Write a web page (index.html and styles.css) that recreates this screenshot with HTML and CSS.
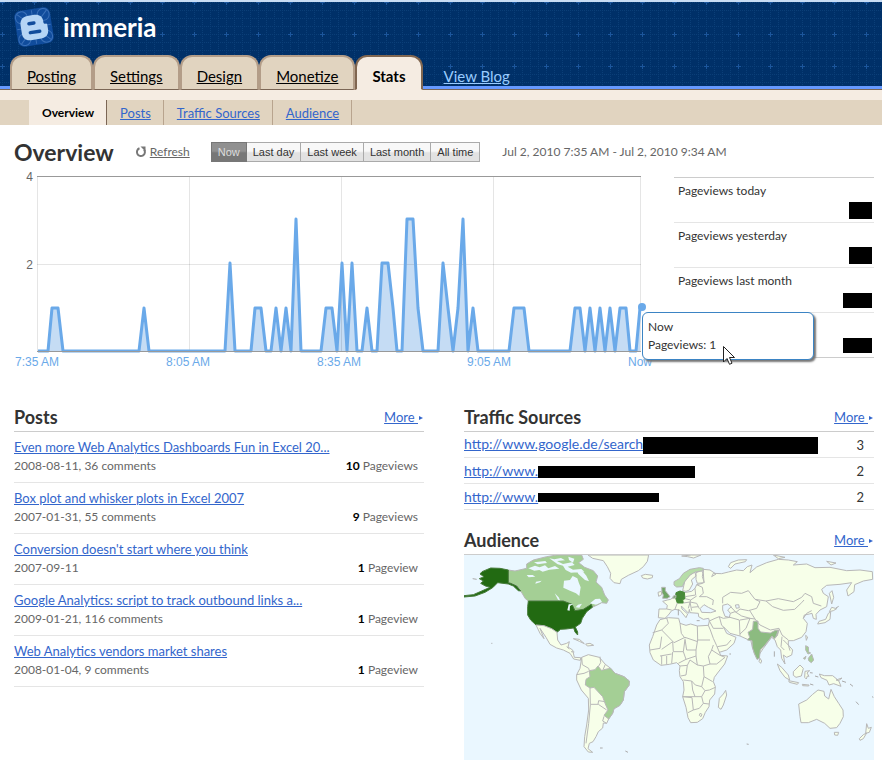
FILE: index.html
```html
<!DOCTYPE html>
<html lang="en">
<head>
    <meta charset="UTF-8">
    <meta name="viewport" content="width=device-width, initial-scale=1.0">
    <title>immeria - Stats</title>
    <link rel="stylesheet" href="styles.css">
</head>
<body>
    <header id="header">
        <div class="brand">
            <svg class="logo" viewBox="0 0 40 40" aria-hidden="true">
                <g transform="rotate(-9 20 20)">
                    <rect x="2" y="2" width="36" height="36" rx="6" fill="#104c9c"/>
                    <g fill="none" stroke="#3a70b8" stroke-width="1">
                        <circle cx="9" cy="9" r="6"/><circle cx="31" cy="9" r="6"/>
                        <circle cx="9" cy="31" r="6"/><circle cx="31" cy="31" r="6"/>
                        <path d="M5 5L35 35M35 5L5 35M20 3V37M3 20H37"/>
                    </g>
                    <path fill="#b5d5f5" d="M15 8h7c5 0 8 3 8 7v2c0 1 1 1.500 2 1.500 1.500 0 1.500 1 1.500 2v4c0 5-3 8-8 8H15c-5 0-8-3-8-8v-8c0-5 3-8.500 8-8.500z"/>
                    <path d="M15.500 16h5M15.500 25h9.500" stroke="#104c9c" stroke-width="3.500" stroke-linecap="round"/>
                </g>
            </svg>
            <h1>immeria</h1>
        </div>
        <nav class="tabs">
            <a href="#">Posting</a>
            <a href="#">Settings</a>
            <a href="#">Design</a>
            <a href="#">Monetize</a>
            <a href="#" class="active">Stats</a>
            <a href="#" class="view-blog">View Blog</a>
        </nav>
    </header>
    <nav class="subtabs">
        <a href="#" class="active">Overview</a>
        <a href="#">Posts</a>
        <a href="#">Traffic Sources</a>
        <a href="#">Audience</a>
    </nav>

    <main id="main">
        <div class="toolbar">
            <h2>Overview</h2>
            <a href="#" class="refresh">
                <svg viewBox="0 0 12 12" aria-hidden="true">
                    <path d="M4.500 2.300A4 4 0 1 0 9 3.500" fill="none" stroke="#777" stroke-width="2"/>
                    <path d="M5.500 0.500H10.500V5.500z" fill="#777"/>
                </svg>
                <span>Refresh</span>
            </a>
            <div class="range">
                <button type="button" class="active">Now</button>
                <button type="button">Last day</button>
                <button type="button">Last week</button>
                <button type="button">Last month</button>
                <button type="button">All time</button>
            </div>
            <span class="dates">Jul 2, 2010 7:35 AM - Jul 2, 2010 9:34 AM</span>
        </div>

        <section class="summary">
            <div class="chart">
                <svg viewBox="14 170 640 204" role="img" aria-label="Pageviews">
                    <polygon class="area" points="38,351 48,351 52,308 58,308 63,351 139,351 144,308 149,351 225,351 230,263 235,351 251,351 255,308 261,308 266,351 271,351 276,308 281,351 286,308 291,351 296,219 301,351 321,351 326,308 332,308 337,351 342,263 347,351 352,263 357,351 362,351 367,308 372,351 377,351 382,263 388,263 393,308 397,351 402,351 407,219 413,219 418,308 423,351 438,351 443,263 448,308 453,351 458,308 463,219 468,351 473,308 478,351 509,351 514,308 524,308 529,351 570,351 575,308 580,308 585,351 590,308 595,351 600,308 605,351 610,308 615,351 620,308 626,308 630,351 636,351 640,308 640,351"/>
                    <g fill="none" stroke="#000" stroke-opacity="0.1">
                        <path d="M37.500 177V351M189.500 177V351M341.500 177V351M493.500 177V351M640.500 177V351M37 264.500H641"/>
                    </g>
                    <polyline class="series" points="38,351 48,351 52,308 58,308 63,351 139,351 144,308 149,351 225,351 230,263 235,351 251,351 255,308 261,308 266,351 271,351 276,308 281,351 286,308 291,351 296,219 301,351 321,351 326,308 332,308 337,351 342,263 347,351 352,263 357,351 362,351 367,308 372,351 377,351 382,263 388,263 393,308 397,351 402,351 407,219 413,219 418,308 423,351 438,351 443,263 448,308 453,351 458,308 463,219 468,351 473,308 478,351 509,351 514,308 524,308 529,351 570,351 575,308 580,308 585,351 590,308 595,351 600,308 605,351 610,308 615,351 620,308 626,308 630,351 636,351 640,308"/>
                    <path d="M37 176.500H641M37 351.500H641" fill="none" stroke="#999"/>
                    <circle cx="642" cy="307" r="4" fill="#6aa9e9"/>
                    <g class="y-labels">
                        <text x="33" y="181">4</text>
                        <text x="33" y="269">2</text>
                    </g>
                    <g class="x-labels">
                        <text x="37" y="366">7:35 AM</text>
                        <text x="188" y="366">8:05 AM</text>
                        <text x="339" y="366">8:35 AM</text>
                        <text x="489" y="366">9:05 AM</text>
                        <text x="640" y="366">Now</text>
                    </g>
                </svg>
                <div class="tooltip">
                    <div>Now</div>
                    <div>Pageviews: 1</div>
                    <svg class="cursor" viewBox="0 0 12 19" aria-hidden="true">
                        <path d="M0.500 0.500V16L4 12.500L6.500 18.300L9 17.200L6.500 11.500H11.500z" fill="#fff" stroke="#222"/>
                    </svg>
                </div>
            </div>
            <ul class="totals">
                <li><span>Pageviews today</span><i class="hidden-value"></i></li>
                <li><span>Pageviews yesterday</span><i class="hidden-value"></i></li>
                <li><span>Pageviews last month</span><i class="hidden-value wide"></i></li>
                <li><span>Pageviews all time history</span><i class="hidden-value wide"></i></li>
            </ul>
        </section>

        <div class="columns">
            <section class="posts">
                <div class="head"><h3>Posts</h3><a href="#">More <b></b></a></div>
                <ul>
                    <li>
                        <a href="#">Even more Web Analytics Dashboards Fun in Excel 20...</a>
                        <p><span>2008-08-11, 36 comments</span><span><b>10</b> Pageviews</span></p>
                    </li>
                    <li>
                        <a href="#">Box plot and whisker plots in Excel 2007</a>
                        <p><span>2007-01-31, 55 comments</span><span><b>9</b> Pageviews</span></p>
                    </li>
                    <li>
                        <a href="#">Conversion doesn't start where you think</a>
                        <p><span>2007-09-11</span><span><b>1</b> Pageview</span></p>
                    </li>
                    <li>
                        <a href="#">Google Analytics: script to track outbound links a...</a>
                        <p><span>2009-01-21, 116 comments</span><span><b>1</b> Pageview</span></p>
                    </li>
                    <li>
                        <a href="#">Web Analytics vendors market shares</a>
                        <p><span>2008-01-04, 9 comments</span><span><b>1</b> Pageview</span></p>
                    </li>
                </ul>
            </section>

            <div class="right">
                <section class="traffic">
                    <div class="head"><h3>Traffic Sources</h3><a href="#">More <b></b></a></div>
                    <table>
                        <tr><td><a href="#">http://www.google.de/search?<i class="bar first"></i></a></td><td>3</td></tr>
                        <tr><td><a href="#">http://www.<i class="bar second"></i></a></td><td>2</td></tr>
                        <tr><td><a href="#">http://www.<i class="bar third"></i></a></td><td>2</td></tr>
                    </table>
                </section>

                <section class="audience">
                    <div class="head"><h3>Audience</h3><a href="#">More <b></b></a></div>
                    <svg class="map" viewBox="12 15 1230 615" role="img" aria-label="Audience by country">
                        <rect x="12" y="15" width="1230" height="615" fill="#eaf7ff"/>
                        <!-- Americas -->
                        <g class="land">
                            <path d="M384 15L398 25 430 32 442 50 452 70 450 85 462 98 480 101 484 88 505 76 535 62 550 50 562 34 566 15z"/>
                            <path d="M544 77L556 73 578 76 577 83 562 87 548 84z"/>
                            <path class="light" d="M145 60L165 63 200 55 200 42 220 30 260 20 290 15 365 15 370 28 356 38 374 52 400 62 413 78 408 96 425 112 434 135 445 150 440 160 425 158 412 165 396 172 394 163 370 178 345 182 336 163 310 153 205 153 196 146 184 126 172 108 152 100 145 98z"/>
                            <path class="top" d="M145 60L120 55 92 54 66 65 60 72 72 80 58 86 70 93 62 100 76 108 90 112 65 123 40 134 12 137 12 141 45 138 75 127 98 113 113 98 145 102 160 108 175 122 182 123 170 108 152 100 145 98z"/>
                            <path class="top" d="M205 153L310 153 336 163 345 182 370 178 394 163 397 172 380 185 367 205 362 220 346 231 353 246 353 255 345 246 341 234 318 237 302 238 291 247 275 236 252 227 228 225 212 210 203 195 203 170z"/>
                            <path d="M228 225L252 227 275 236 291 247 293 270 303 285 320 280 328 275 324 291 338 300 343 322 362 323 361 331 341 327 330 310 310 300 290 294 270 283 258 262 240 235 252 266 240 250z"/>
                            <path d="M340 266L358 268 373 281 358 274zM377 282L390 280 401 286 382 288z"/>
                            <path d="M365 322L385 314 418 322 436 343 452 355 465 370 492 380 508 393 507 406 493 425 490 450 480 466 462 476 458 490 446 507 440 520 430 519 428 534 415 545 408 560 399 575 388 580 384 596 398 607 385 606 372 590 374 560 380 525 386 480 385 445 364 420 350 390 350 374 360 355z"/>
                            <path class="light" d="M378 388L390 380 388 362 405 359 414 348 424 361 441 357 452 355 465 370 492 380 508 393 507 406 493 425 490 450 480 466 462 476 458 490 446 507 432 496 444 480 436 462 428 440 402 412 390 414 376 405z"/>
                            <path class="line" d="M365 322L367 344 386 355 388 362M420 320L422 338 416 348M436 343L430 357M350 374L372 370 386 364M390 414L391 465 386 520 378 580M393 463L415 463 440 480M414 462L416 452 435 455M432 499L428 513 440 520M320 290L328 297M333 305L343 306"/>
                        </g>
                        <g fill="#eaf7ff">
                            <path d="M312 92L330 90 338 78 352 85 357 100 362 112 358 138 348 130 330 122 310 113zM200 75h18l8 5-20 2zM228 95l17-3-5 5-14 4zM284 130l12 12 4 9-6-2zM322 181l4-18 14-1-10 6-1 14zM390 160l16-13 14-1 6 10-18 8zM347 172l7-8 12-3-8 12z"/>
                            <path d="M205 55l20-8 14 5 16-6 10 9 20-7 13 8-30 3-20 6-10-5-15 2zM268 25l15 3 20-4 12 7-24 2 18 9 26-5 9 8-21 5 16 9 25-2 9 8-40 3-16-8-8-13-16-4zM222 37l34-4 5 6-28 4zM325 20l18 6-4 12-12-8zM350 61l14-2 15 18 8 17-12-4-20-18z"/>
                        </g>
                        <!-- Europe, Africa, Asia, Oceania -->
                        <g class="land" transform="translate(600 0)">
                            <path d="M-3 177L20 177 22 166 8 154 22 150 32 148 45 138 50 128 60 124 72 128 95 124 105 115 110 104 128 100 130 58 150 60 168 72 155 80 160 70 185 71 205 66 230 60 250 62 262 50 276 45 270 68 290 51 320 38 355 28 385 30 412 35 400 45 440 42 465 53 510 52 560 62 600 60 637 65 638 88 610 93 584 104 582 125 564 138 560 120 575 98 540 103 500 106 485 118 490 130 505 140 500 170 480 180 468 193 469 208 460 205 456 190 448 192 433 195 430 205 442 220 438 245 425 262 400 272 385 272 385 285 398 300 395 315 380 322 370 315 375 342 365 325 362 300 352 290 345 270 335 262 325 275 310 295 300 310 292 328 283 310 277 290 272 270 262 268 240 258 210 250 190 230 200 250 228 262 222 280 200 300 175 308 165 290 150 260 142 240 148 213 146 205 130 208 116 200 115 190 90 188 88 178 86 190 74 178 64 168 66 177 83 192 78 203 60 181 45 178 35 182 25 195 15 205-5 203z"/>
                            <path d="M68 122L74 95 90 75 104 65 108 78 94 90 98 102 88 120 78 124zM108 68L124 62 130 70 132 98 112 100 108 88z"/>
                            <path class="pale" d="M42 95L58 86 70 70 90 58 118 53 130 55 128 62 106 66 90 75 74 95 67 110 50 111 42 105z"/>
                            <path class="uk" d="M5 112L16 112 16 122 24 132 30 140 22 145 8 145 10 135 6 128z"/>
                            <path d="M-6 127L4 124 5 134-4 139z"/>
                            <path class="germany" d="M48 128L60 123 73 127 75 146 68 149 70 159 52 159 47 145z"/>
                            <path class="uk" d="M40 138L48 136 47 144 38 145z"/>
                            <path d="M0 209L25 203 56 205 60 220 78 226 92 222 112 228 145 226 151 240 160 265 170 287 182 316 203 318 194 342 175 366 163 382 160 395 166 410 164 432 149 450 147 470 136 487 128 506 112 517 92 518 84 503 78 472 68 440 72 420 70 395 60 380 58 362 60 348 50 338 28 343 3 346-20 330-30 308-32 285-22 260-10 225z"/>
                            <path d="M197 421L200 435 190 465 183 478 175 472 178 445 190 432z"/>
                            <path d="M416 462L440 450 458 433 474 420 492 424 494 438 506 447 513 418 523 440 536 460 549 480 550 500 540 520 530 533 510 535 494 520 470 508 445 518 423 518 420 500zM523 547L536 547 533 556 524 555z"/>
                            <path d="M620 521L625 535 634 532 628 547 617 550zM620 549L610 566 600 571 598 566 610 554z"/>
                            <path d="M352 342L365 352 385 375 389 390 375 382 360 362zM386 392L416 398 412 403 388 397zM400 365L420 345 430 355 424 378 408 382 400 376zM435 364l14-2-8 7 6 10-5-1-3 9-5-5zM427 403l20 2-1 3-18-1zM478 372l15 5 25 0 18 15 7 17-22-8-14 4-6-14-18-8zM546 384l-10 8-8-2z"/>
                            <path d="M515 172l15 4-10 6-12 3zM512 186l-2 22-15 10-22 4 4-8 20-6 8-18zM508 130l8-8 5 20-6 20-3-15zM437 256l6 5-4 10zM300 325l5 8-3 7-5-6z"/>
                            <path class="light" d="M437 287l8 4 1 15 6 3-8 3-7-12zM445 325l10-13 6 18-7 8-8-6zM430 325l8-6-3 9z"/>
                            <path d="M205 50L212 38 235 30 260 29 256 35 225 42 212 55zM65 18l30-3h28l-22 9-18-4zM340 15l35 7-20 4zM500 34l28 5-15 6z"/>
                            <path class="india" d="M280 214L294 213 294 235 302 246 331 249 346 241 357 240 352 257 342 266 336 258 331 265 315 285 301 300 298 325 291 328 283 310 277 292 276 272 262 270 269 262 264 247 278 238z"/>
                            <path class="sea" d="M188 166L203 162 214 170 203 180 211 190 208 202 195 199 188 180zM120 176L132 164 145 172 168 183 152 188 125 187zM226 165l10-1 2 9-9 2z"/>
                            <path class="line" d="M130 58L127 80 133 98M110 104L127 112 130 130 118 140 140 140 160 150 158 165M105 115L107 135 75 140M75 146L92 150 110 138M70 159L90 156 110 160 118 176M92 150L85 175M52 159L45 177M20 177L35 180M95 172L115 170M90 156L95 182"/>
                            <path class="line" d="M188 160L188 142 212 127 245 130 265 122 285 148 318 153 355 146 400 155 425 142 435 130 455 140 460 160 484 168M318 153L338 170 370 181 404 178 425 158 432 150M285 148L300 155 290 175 265 182 240 177 228 187 212 170M211 190L225 185 245 198 270 205 285 207 268 180M178 200L190 205 210 202 238 210 240 257M240 210L270 205 258 235 240 252M285 207L300 225 331 240 357 235 366 255 385 270M148 213L165 205 178 200 185 226 190 230M148 213L160 235 190 235M172 290L200 285 213 270M355 240L346 265M366 260L363 290 373 300M370 270L385 285 390 302M430 205L440 190 455 182"/>
                            <path class="line" d="M-22 248L5 240 25 220 20 204M5 240L42 278 75 262 113 275M60 220L64 250 75 265M112 228L113 270 150 270M-30 300L0 295 5 260M5 298L38 275 40 305 70 305 75 268M38 306L35 340M0 318L35 312M5 318L5 344M20 318L20 343M70 305L78 328 55 340M75 268L80 300 108 300 113 270M78 328L108 318 108 300M108 318L112 345 130 348 150 342 145 320 155 300 160 285M155 300L180 316 195 322 170 342 150 342M60 348L82 346 90 330 112 345M82 346L78 375 62 378M70 390L95 393 106 405 125 410 132 380 130 348M132 380L158 395M95 393L98 420 105 440 68 440M105 440L125 440 135 422 125 410M135 422L148 420 166 412M68 440L96 443 100 480 84 488M100 480L118 475 130 460 125 440M130 460L147 462M120 490l6 3-3 7-5-4z"/>
                        </g>
                        <g fill="none" stroke="#aaa" stroke-width="3">
                            <path d="M38 86l12 2M94 280h3M420 594h8M496 603l8 4M860 582l6 1M1188 455l8 9M1146 393l12 4M1170 402l9 7M1236 440l4 2M808 312h5M1128 174l8-5M1050 368l8 1M1065 378l10 3M1050 402l10 3M943 304v16M655 178v18M710 212h9"/>
                        </g>
                    </svg>
                </section>
            </div>
        </div>
    </main>
</body>
</html>
```
FILE: styles.css
```css
* {
    box-sizing: border-box;
}
body {
    margin: 0;
    background: #fff;
    color: #333;
    font: 12px/18px Lato, "Trebuchet MS", sans-serif;
}
h1, h2, h3, p, ul {
    margin: 0;
    padding: 0;
}
ul {
    list-style: none;
}
a {
    color: #36c;
}

/* header */
#header {
    height: 90px;
    display: flex;
    flex-direction: column;
    justify-content: space-between;
    border-top: 2px solid #c8dcf4;
    background-color: #003068;
    background-image:
        linear-gradient(#69f, #69f),
        url("data:image/svg+xml,%3Csvg xmlns='http://www.w3.org/2000/svg' width='32' height='32'%3E%3Cg stroke='%230b3f78' stroke-dasharray='1 1'%3E%3Cpath d='M0 2.5H32M0 10.5H32M0 18.5H32M0 26.5H32M2.5 0V32M10.5 0V32M18.5 0V32M26.5 0V32'/%3E%3C/g%3E%3Cpath d='M0 2.5H5M2.5 0V5' stroke='%231c569c'/%3E%3C/svg%3E");
    background-repeat: no-repeat, repeat;
    background-position: 0 84px, 0 -2px;
    background-size: 100% 4px, 32px 32px;
    box-shadow: inset 0 -1px #7b6655;
}
.brand {
    display: flex;
    align-items: center;
    gap: 9px;
    padding: 5px 14px 0;
}
.logo {
    width: 40px;
    height: 40px;
}
.brand h1 {
    color: #fff;
    font-size: 26px;
    line-height: 40px;
}
.tabs {
    display: flex;
    padding-left: 10px;
}
.tabs a {
    height: 35px;
    padding: 9px 15px 0;
    border: 2px solid #b39d88;
    border-bottom: 1px solid #7b6655;
    border-radius: 12px 12px 0 0;
    background: #e1d4c0;
    color: #000;
    font-size: 15px;
    line-height: 20px;
}
.tabs .active {
    border-color: #806650;
    border-bottom-color: #f5ece2;
    background: #f5ece2;
    font-weight: bold;
    text-decoration: none;
}
.tabs .view-blog {
    margin-left: 4px;
    border-color: transparent;
    background: none;
    color: #9cf;
}
.subtabs {
    display: flex;
    border-top: 10px solid #f5ece2;
    padding-left: 29px;
    background: #e1d4c0;
    font-size: 13px;
}
.subtabs a {
    height: 25px;
    padding: 4px 12px 0 13px;
    border-right: 1px solid #b8a48e;
}
.subtabs .active {
    border-color: #7b6655;
    background: #f5ece2;
    color: #000;
    font-size: 12px;
    font-weight: bold;
    text-decoration: none;
}

/* overview */
#main {
    padding: 12px 8px 14px 14px;
}
.toolbar {
    display: flex;
    align-items: center;
    height: 30px;
}
.toolbar h2 {
    margin-right: 21px;
    font-size: 23px;
}
.refresh {
    display: flex;
    align-items: center;
    gap: 3px;
    margin-right: 21px;
    color: #666;
}
.refresh svg {
    width: 12px;
    height: 12px;
}
.range {
    display: flex;
    margin-right: 22px;
}
.range button {
    height: 20px;
    padding: 0 6px;
    border: 1px solid #aaa;
    border-left-width: 0;
    background: linear-gradient(#f8f8f8 45%, #e2e2e2 55%);
    color: #333;
    font: 11px "Liberation Sans", Arial, sans-serif;
}
.range .active {
    border-color: #777;
    border-left-width: 1px;
    background: linear-gradient(#909090 45%, #777 55%);
    color: #ddd;
}
.dates {
    color: #666;
}
.summary {
    display: grid;
    grid-template-columns: 1fr 200px;
    gap: 20px;
    align-items: start;
}
.chart {
    position: relative;
    padding-top: 3px;
}
.chart > svg {
    display: block;
    width: 100%;
}
.area {
    fill: #c5dcf4;
}
.series {
    fill: none;
    stroke: #6aa9e9;
    stroke-width: 3;
    stroke-linejoin: round;
}
.chart text {
    font: 12px "Liberation Sans", Arial, sans-serif;
}
.y-labels {
    fill: #666;
    text-anchor: end;
}
.x-labels {
    fill: #6aa9e9;
    text-anchor: middle;
}
.tooltip {
    position: absolute;
    top: 145px;
    left: calc(100% - 12px);
    width: 172px;
    padding: 5px;
    border: 1px solid #3b84c4;
    border-radius: 6px;
    background: #fff;
    box-shadow: 2px 2px 2px #777;
}
.cursor {
    position: absolute;
    top: 33px;
    left: 80px;
    width: 12px;
    height: 19px;
}
.totals {
    margin-top: 10px;
    border-top: 1px solid #ccc;
    border-bottom: 1px solid #ccc;
}
.totals li {
    display: flex;
    flex-direction: column;
    height: 45px;
    padding: 4px 2px 3px 4px;
    border-bottom: 1px solid #e5e5e5;
}
.totals li:last-child {
    height: 44px;
    border-bottom: 0;
}
.hidden-value {
    align-self: flex-end;
    width: 23px;
    height: 17px;
    margin-top: 2px;
    background: #000;
}
.hidden-value.wide {
    width: 29px;
    height: 15px;
    margin-top: 3px;
}

/* lists */
.columns {
    display: grid;
    grid-template-columns: 1fr 1fr;
    gap: 40px;
    margin-top: 29px;
}
.head {
    display: flex;
    justify-content: space-between;
    align-items: center;
    height: 29px;
    border-bottom: 1px solid #ccc;
}
.head h3 {
    font-size: 18px;
}
.head a {
    font-size: 13px;
}
.head b {
    display: inline-block;
    margin: 0 1px 2px;
    border: 2px solid transparent;
    border-left: 4px solid #36c;
    border-right: 0;
}
.posts li {
    height: 51px;
    padding: 6px 6px 0 0;
    border-bottom: 1px solid #e5e5e5;
}
.posts li a {
    display: block;
    font-size: 13px;
    line-height: 19px;
}
.posts p {
    display: flex;
    justify-content: space-between;
    color: #666;
}
.posts p b {
    color: #000;
}
.traffic table {
    width: 100%;
    border-spacing: 0;
    font-size: 14px;
}
.traffic td {
    height: 26px;
    padding: 0;
    border-bottom: 1px solid #e5e5e5;
    white-space: nowrap;
}
.traffic td:last-child {
    padding-right: 10px;
    text-align: right;
    font-size: 13px;
}
.bar {
    display: inline-block;
    height: 12px;
    vertical-align: middle;
    background: #000;
}
.bar.first {
    width: 175px;
    height: 17px;
    margin-left: -6px;
}
.bar.second {
    width: 157px;
}
.bar.third {
    width: 121px;
    height: 9px;
}
.audience {
    margin-top: 16px;
}

/* map */
.map {
    display: block;
    width: 100%;
}
.land path {
    fill: #f7ffe9;
    stroke: #b8b8b8;
    stroke-width: 3;
    stroke-linejoin: round;
}
.land .line {
    fill: none;
}
.land .light {
    fill: #a4cf95;
}
.land .top {
    fill: #226a12;
    stroke: #477c3b;
}
.land .pale {
    fill: #b6dda8;
}
.land .uk {
    fill: #6fa565;
}
.land .germany {
    fill: #478a38;
    stroke: #478a38;
}
.land .india {
    fill: #8cbb80;
}
.land .sea {
    fill: #eaf7ff;
}
```
